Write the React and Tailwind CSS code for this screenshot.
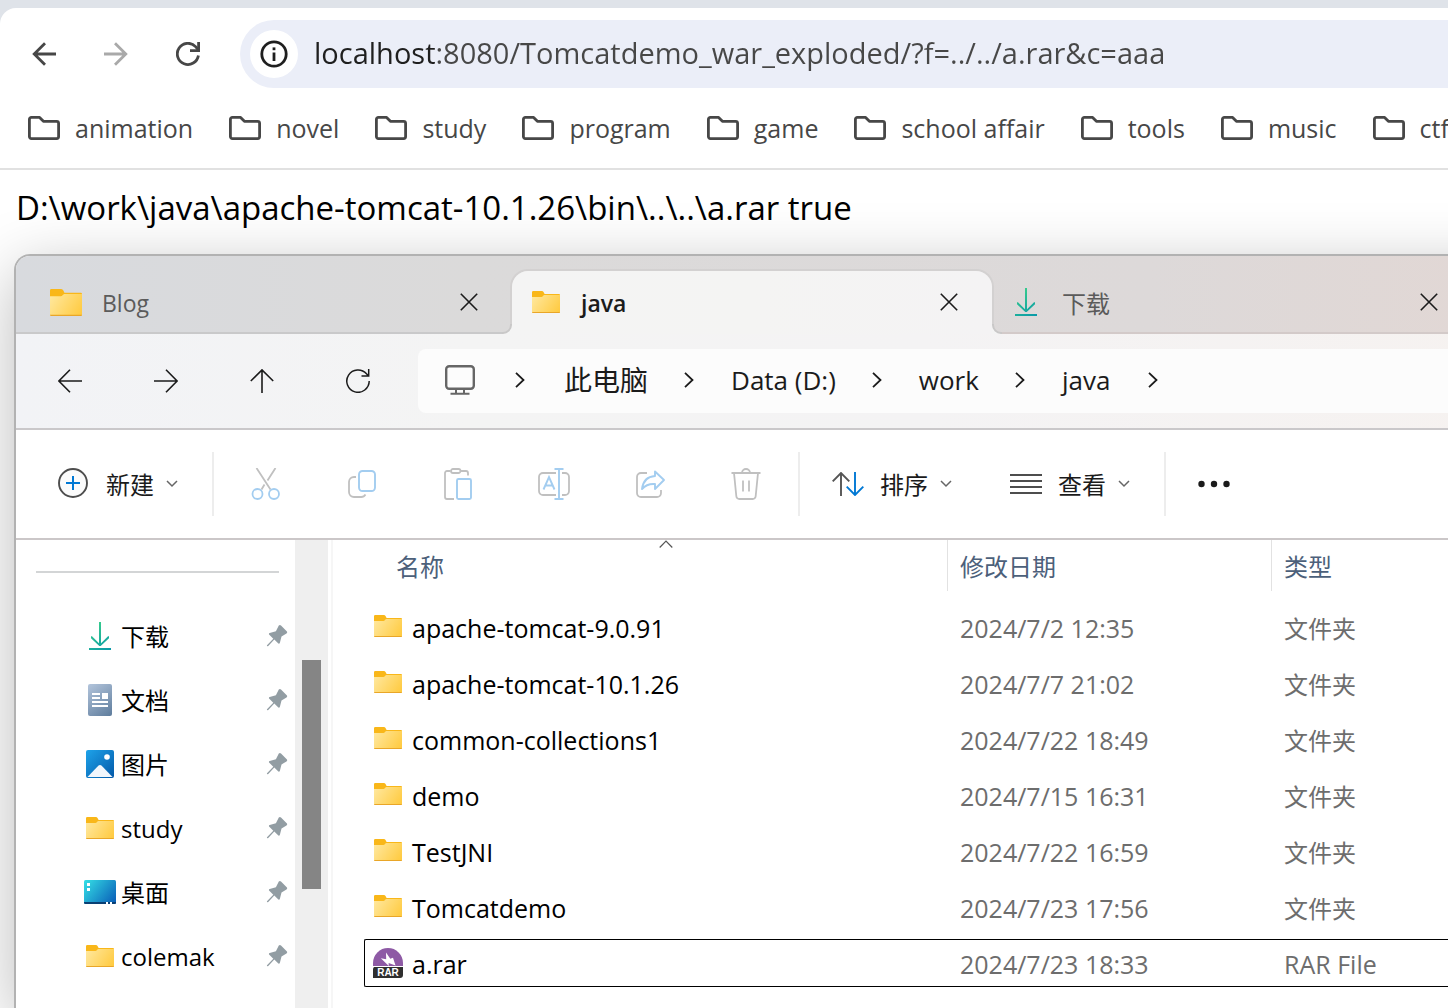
import React from "react";

const bookmarks = ["animation", "novel", "study", "program", "game", "school affair", "tools", "music", "ctf"];

const files = [
  { name: "apache-tomcat-9.0.91", date: "2024/7/2 12:35", type: "文件夹" },
  { name: "apache-tomcat-10.1.26", date: "2024/7/7 21:02", type: "文件夹" },
  { name: "common-collections1", date: "2024/7/22 18:49", type: "文件夹" },
  { name: "demo", date: "2024/7/15 16:31", type: "文件夹" },
  { name: "TestJNI", date: "2024/7/22 16:59", type: "文件夹" },
  { name: "Tomcatdemo", date: "2024/7/23 17:56", type: "文件夹" },
  { name: "a.rar", date: "2024/7/23 18:33", type: "RAR File", selected: true },
];

/* ---------- icons ---------- */

function Svg({ w, h, className = "", children }) {
  return (
    <svg width={w} height={h} viewBox={`0 0 ${w} ${h}`} fill="none" className={`shrink-0 ${className}`} aria-hidden="true">
      {children}
    </svg>
  );
}

const ChromeBack = () => (
  <Svg w={24} h={24}>
    <path d="M24 12H2M13 1.2 2.2 12 13 22.8" stroke="#474747" strokeWidth="2.8" />
  </Svg>
);

const ChromeForward = () => (
  <Svg w={24} h={24}>
    <path d="M0 12h22M11 1.2 21.8 12 11 22.8" stroke="#a9a9a9" strokeWidth="2.8" />
  </Svg>
);

const ChromeReload = () => (
  <Svg w={24} h={24}>
    <path d="M22.4 13.5A10.6 10.6 0 1 1 19.6 4.6L22.5 8" stroke="#474747" strokeWidth="2.8" />
    <path d="M22.6 0v8.6H14" stroke="#474747" strokeWidth="2.8" />
  </Svg>
);

const InfoIcon = () => (
  <Svg w={28} h={28}>
    <circle cx="14" cy="14" r="12.2" stroke="#1f1f1f" strokeWidth="2.8" />
    <path d="M14 12.5V21" stroke="#1f1f1f" strokeWidth="2.8" />
    <path d="M14 7.4v2.8" stroke="#1f1f1f" strokeWidth="2.8" />
  </Svg>
);

const BookmarkFolder = () => (
  <Svg w={32} h={24}>
    <path d="M1.4 3.4a2 2 0 0 1 2-2h8.2l3.8 3.9h13.2a2 2 0 0 1 2 2v13.3a2 2 0 0 1-2 2H3.4a2 2 0 0 1-2-2z" stroke="#474747" strokeWidth="2.8" strokeLinejoin="round" />
  </Svg>
);

const FolderIcon = ({ big = false }) => (
  <svg width={big ? 32 : 28} height={big ? 27 : 22} viewBox="0 0 28 22" preserveAspectRatio="none" fill="none" className="shrink-0" aria-hidden="true">
    <defs>
      <linearGradient id="folderFace" x1="0" y1="3" x2="28" y2="22" gradientUnits="userSpaceOnUse">
        <stop stopColor="#ffe9a2" />
        <stop offset="1" stopColor="#ffc93c" />
      </linearGradient>
    </defs>
    <path d="M0 1.200A1.200 1.200 0 0 1 1.200 0h8.600c.8 0 1.500.6 2 1.400L12.600 3H27a1 1 0 0 1 1 1v3H0z" fill="#f9b719" />
    <path d="M0 6h9.500c1.200 0 1.800-2 3-2H28v16.800a1.200 1.200 0 0 1-1.200 1.200H1.200A1.200 1.200 0 0 1 0 20.800z" fill="url(#folderFace)" />
    <path d="M0 21h28a1 1 0 0 1-1 1H1a1 1 0 0 1-1-1z" fill="#e9a628" />
  </svg>
);

const DownloadIcon = () => (
  <Svg w={22} h={28}>
    <defs>
      <linearGradient id="dl" x1="2" y1="2" x2="20" y2="28" gradientUnits="userSpaceOnUse">
        <stop stopColor="#3bd08a" />
        <stop offset="1" stopColor="#0a9aa8" />
      </linearGradient>
    </defs>
    <path d="M10 0h2v21.200l7-7H20v2L11.700 24h-1.400L2 16.200v-2h1l7 7zM0 26h22v2H0z" fill="url(#dl)" />
  </Svg>
);

const DocumentIcon = () => (
  <Svg w={24} h={32}>
    <defs>
      <linearGradient id="doc" x1="0" y1="0" x2="24" y2="32" gradientUnits="userSpaceOnUse">
        <stop stopColor="#b3c5dc" />
        <stop offset="1" stopColor="#5e7c9c" />
      </linearGradient>
    </defs>
    <rect width="24" height="32" rx="2" fill="url(#doc)" />
    <path d="M4 9h8v2H4zM4 13h8v2H4zM14 9h6v6h-6zM4 17h16v2H4zM4 21h16v2H4z" fill="#fff" />
  </Svg>
);

const PictureIcon = () => (
  <Svg w={28} h={28}>
    <defs>
      <linearGradient id="pic" x1="0" y1="0" x2="28" y2="28" gradientUnits="userSpaceOnUse">
        <stop stopColor="#1ea3ea" />
        <stop offset="1" stopColor="#0358a8" />
      </linearGradient>
    </defs>
    <rect width="28" height="28" rx="2" fill="url(#pic)" />
    <path d="m1.500 27 10.800-11.300a2.500 2.500 0 0 1 3.400 0L26.500 27z" fill="#f1f6fc" />
    <circle cx="21" cy="7" r="2.800" fill="#fff" />
  </Svg>
);

const DesktopIcon = () => (
  <Svg w={32} h={24}>
    <defs>
      <linearGradient id="desk" x1="0" y1="0" x2="30" y2="24" gradientUnits="userSpaceOnUse">
        <stop stopColor="#35e0e6" />
        <stop offset="1" stopColor="#0a5fb8" />
      </linearGradient>
    </defs>
    <rect width="32" height="24" rx="1.500" fill="url(#desk)" />
    <path d="M0 22h32v.5a1.500 1.500 0 0 1-1.500 1.500h-29A1.500 1.500 0 0 1 0 22.500z" fill="#0a3f73" />
    <path d="M3 3h3v3H3zM3 8h3v3H3zM22 22h2v2h-2zM26 22h2v2h-2z" fill="#fff" />
  </Svg>
);

const RarIcon = () => (
  <Svg w={30} h={30}>
    <path d="M0 18V15a15 15 0 0 1 30 0v3z" fill="#8e5aa5" />
    <path d="M13 4.500 17.300 10.800 20 9.800 22.500 17.600 15.600 14.900 15.800 18 7.800 10.300 13.200 11.200z" fill="#fff" />
    <path d="M3 18.500h27V27a3 3 0 0 1-3 3H0v-8.500a3 3 0 0 1 3-3z" fill="#2f2f2f" />
    <path d="M0 18.500h30" stroke="#fff" />
    <text x="15" y="28" textAnchor="middle" fontFamily="Liberation Sans, sans-serif" fontWeight="700" fontSize="10" fill="#fff">RAR</text>
  </Svg>
);

const PinIcon = () => (
  <Svg w={22} h={22}>
    <path d="M12.800.6c.7-.7 1.500-.7 2.200 0l5.700 5.600c.7.7.7 1.700-.2 2.200l-5 3-1.600 6.400c-.3.900-1.200 1.100-1.800.5l-3.800-3.800L2 21.200c-.6.500-1.500-.4-1-1l6.300-6.400-4-4c-.7-.7-.4-1.500.4-1.700l6.200-1.800z" fill="#929da3" />
  </Svg>
);

const CloseIcon = () => (
  <Svg w={18} h={18}>
    <path d="m.8.8 16.400 16.400M17.200.8.800 17.200" stroke="#1b1b1b" strokeWidth="1.600" />
  </Svg>
);

const ChevronRight = () => (
  <Svg w={10} h={16}>
    <path d="m1 .8 7.500 7.200L1 15.200" stroke="#1b1b1b" strokeWidth="1.800" />
  </Svg>
);

const ChevronDown = () => (
  <Svg w={12} h={8}>
    <path d="m1 1 5 5 5-5" stroke="#666" strokeWidth="1.500" />
  </Svg>
);

const navIcons = [
  ["后退", <Svg key="b" w={24} h={24}><path d="M24 12H1.500M12 .8.900 12 12 23.200" stroke="#1b1b1b" strokeWidth="1.600" /></Svg>],
  ["前进", <Svg key="f" w={24} h={24}><path d="M0 12h22.500M12 .8 23.100 12 12 23.200" stroke="#1b1b1b" strokeWidth="1.600" /></Svg>],
  ["向上", <Svg key="u" w={24} h={24}><path d="M12 24V1.500M.8 12 12 .9 23.200 12" stroke="#1b1b1b" strokeWidth="1.600" /></Svg>],
  ["刷新", <Svg key="r" w={24} h={24}><path d="M23.200 12A11.200 11.200 0 1 1 20.500 4.800L22.500 7M22.700 0v7H15.500" stroke="#1b1b1b" strokeWidth="1.500" /></Svg>],
];

const MonitorIcon = () => (
  <Svg w={30} h={30}>
    <rect x="1.200" y="1.200" width="27.600" height="22.600" rx="3" stroke="#666" strokeWidth="2.400" />
    <path d="M11 24v4M19 24v4M5.500 28.700h19" stroke="#666" strokeWidth="2" />
  </Svg>
);

const G = "#c0c0c0";
const B = "#a3cdf0";
const actions = [
  ["剪切", <Svg key="1" w={32} h={32}>
    <path d="M6.500 0 20.500 21.500M25.500 0l-8 12.500M14.500 16.500 11.500 21.500" stroke={G} strokeWidth="1.800" />
    <circle cx="7.500" cy="26" r="5" stroke={B} strokeWidth="1.800" />
    <circle cx="24" cy="26" r="5" stroke={B} strokeWidth="1.800" />
  </Svg>],
  ["复制", <Svg key="2" w={32} h={32}>
    <path d="M10 9H8a5 5 0 0 0-5 5v10a5 5 0 0 0 5 5h7a5 5 0 0 0 4.500-2.500" stroke={G} strokeWidth="1.800" />
    <rect x="13" y="3" width="16" height="20" rx="3.500" stroke={B} strokeWidth="1.900" />
  </Svg>],
  ["粘贴", <Svg key="3" w={32} h={32}>
    <path d="M8.500 3H5a2 2 0 0 0-2 2v24a2 2 0 0 0 2 2h7M18.500 3H24a2 2 0 0 1 2 2v2.500" stroke={G} strokeWidth="1.800" />
    <rect x="9" y="1" width="9.500" height="4" rx="2" stroke={G} strokeWidth="1.800" />
    <rect x="15" y="11" width="14" height="20" rx="1.500" stroke={B} strokeWidth="1.900" />
  </Svg>],
  ["重命名", <Svg key="4" w={32} h={32}>
    <path d="M18 5H5a4 4 0 0 0-4 4v14a4 4 0 0 0 4 4h13M24 5h3a4 4 0 0 1 4 4v14a4 4 0 0 1-4 4h-3" stroke={G} strokeWidth="1.800" />
    <path d="M21 1v30M16.500 1h9M16.500 31h9M5.500 21.500 11 9l5.500 12.500M7.500 17.500h7" stroke={B} strokeWidth="1.900" />
  </Svg>],
  ["共享", <Svg key="5" w={32} h={32}>
    <path d="M13 5H7a4 4 0 0 0-4 4v16a4 4 0 0 0 4 4h16a4 4 0 0 0 4-4v-3" stroke={G} strokeWidth="1.800" />
    <path d="M21 3.500 30 12l-9 9v-5c-6-.5-9.500 1-13 5C9 13 13 8.500 21 8z" stroke={B} strokeWidth="1.900" strokeLinejoin="round" />
  </Svg>],
  ["删除", <Svg key="6" w={32} h={32}>
    <path d="M1.500 5h29M12 5a4 4 0 0 1 8 0M4 5l2.300 23a3 3 0 0 0 3 3h13.400a3 3 0 0 0 3-3L28 5M13 12.500v11M19 12.500v11" stroke={G} strokeWidth="1.800" />
  </Svg>],
];

const NewIcon = () => (
  <Svg w={32} h={32}>
    <circle cx="15" cy="15" r="14" stroke="#4d4d4d" strokeWidth="1.900" fill="#fbfbfb" />
    <path d="M15 8v14M8 15h14" stroke="#0078d4" strokeWidth="2" />
  </Svg>
);

const SortIcon = () => (
  <Svg w={32} h={24}>
    <path d="M9 24V1.500M.7 9.300 9 1l8.300 8.300" stroke="#555" strokeWidth="1.900" />
    <path d="M23 0v22.500M14.700 14.700 23 23l8.300-8.300" stroke="#0078d4" strokeWidth="1.900" />
  </Svg>
);

const ViewIcon = () => (
  <Svg w={32} h={20}>
    <path d="M0 1h32M0 7h32M0 13h32M0 19h32" stroke="#4d4d4d" strokeWidth="1.900" />
  </Svg>
);

const MoreIcon = () => (
  <Svg w={32} h={8}>
    <circle cx="3.500" cy="4" r="3.200" fill="#1b1b1b" />
    <circle cx="16" cy="4" r="3.200" fill="#1b1b1b" />
    <circle cx="28.500" cy="4" r="3.200" fill="#1b1b1b" />
  </Svg>
);

/* ---------- explorer parts ---------- */

const quickAccess = [
  ["下载", <DownloadIcon key="d" />],
  ["文档", <DocumentIcon key="w" />],
  ["图片", <PictureIcon key="p" />],
  ["study", <FolderIcon key="s" />],
  ["桌面", <DesktopIcon key="k" />],
  ["colemak", <FolderIcon key="c" />],
];

function MenuButton({ icon, label, className = "" }) {
  return (
    <button className={`flex shrink-0 items-center text-2xl text-[#1b1b1b] ${className}`}>
      {icon}
      <span className="mr-3 ml-4 pt-[2px]">{label}</span>
      <ChevronDown />
    </button>
  );
}

const Separator = () => <div className="h-16 w-[2px] shrink-0 bg-[#ededed]" />;

/* Small curved foot where the active tab meets its neighbour */
function TabFoot({ className }) {
  return (
    <svg width="10" height="10" viewBox="0 0 10 10" fill="none" className={`absolute bottom-0 ${className}`} aria-hidden="true">
      <path d="M10 0v10H0V9h1a8 8 0 0 0 8-8V0z" fill="#f4f4f4" />
      <path d="M0 9h1a8 8 0 0 0 8-8V0" stroke="#c9c8c8" strokeWidth="2" />
    </svg>
  );
}

function Tabs() {
  return (
    <div role="tablist" className="flex h-[78px] items-end overflow-hidden rounded-tl-[14px] bg-[linear-gradient(to_right,#d8dade,#dbdada_30%,#ddd9d9_75%,#e2d7d4)]">
      <div className="flex h-full w-[496px] shrink-0 items-center border-b-2 border-[#c9c9ca] pt-4 pr-[34px] pl-[34px] text-2xl text-[#5b5b5b]">
        <FolderIcon big />
        <button role="tab" aria-selected="false" className="ml-5 flex-1 pt-[2px] text-left text-[23px]">Blog</button>
        <button aria-label="关闭"><CloseIcon /></button>
      </div>
      <div className="relative flex h-[63px] w-[480px] shrink-0 items-center rounded-t-2xl bg-[linear-gradient(to_right,#f4f4f4,#f4f4f3_50%,#f4f3f4)] pr-[34px] pb-[2px] pl-5 text-[23px] font-semibold text-[#1b1b1b] shadow-[0_0_0_2px_#d3d1d1]">
        <TabFoot className="-left-[10px]" />
        <TabFoot className="-right-[10px] -scale-x-100" />
        <FolderIcon />
        <button role="tab" aria-selected="true" className="ml-[21px] flex-1 pt-1 text-left">java</button>
        <button aria-label="关闭"><CloseIcon /></button>
      </div>
      <div className="flex h-full min-w-[480px] flex-1 items-center border-b-2 border-[#d3cac9] pt-4 pr-[34px] pl-[23px] text-2xl text-[#5b5b5b]">
        <DownloadIcon />
        <button role="tab" aria-selected="false" className="ml-[25px] w-[358px] pt-[3px] text-left">下载</button>
        <button aria-label="关闭"><CloseIcon /></button>
      </div>
    </div>
  );
}

function NavBar() {
  return (
    <div className="flex h-24 items-center border-b-2 border-[#cac8ca] bg-[linear-gradient(to_right,#f2f3f6,#f4f4f4_30%,#f4f3f4_60%,#f6f2f0)] pl-[6px]">
      {navIcons.map(([label, icon]) => (
        <button key={label} aria-label={label} className="flex h-16 w-24 shrink-0 items-center justify-center">{icon}</button>
      ))}
      <nav aria-label="路径" className="ml-3 flex h-16 flex-1 items-center overflow-hidden rounded-l-lg bg-[#fcfcfc] pb-[2px] pl-[27px] text-[26px] whitespace-nowrap text-[#1b1b1b]">
        <MonitorIcon />
        <span className="mr-[39px] ml-10"><ChevronRight /></span>
        <a href="#" className="text-[28px]">此电脑</a>
        {["Data (D:)", "work", "java"].map((part) => (
          <React.Fragment key={part}>
            <span className="mr-[37px] ml-9"><ChevronRight /></span>
            <a href="#">{part}</a>
          </React.Fragment>
        ))}
        <span className="ml-[38px]"><ChevronRight /></span>
      </nav>
    </div>
  );
}

function Toolbar() {
  return (
    <div className="flex h-[110px] items-center overflow-hidden border-b-2 border-[#cbc7c8] bg-white">
      <MenuButton icon={<NewIcon />} label="新建" className="mr-[34px] ml-[42px]" />
      <Separator />
      <div className="flex px-1">
        {actions.map(([label, icon]) => (
          <button key={label} aria-label={label} disabled className="flex h-16 w-24 shrink-0 items-center justify-center">{icon}</button>
        ))}
      </div>
      <Separator />
      <MenuButton icon={<SortIcon />} label="排序" className="ml-8" />
      <MenuButton icon={<ViewIcon />} label="查看" className="mr-[34px] ml-[58px]" />
      <Separator />
      <button aria-label="更多" className="ml-8 flex h-16 items-center"><MoreIcon /></button>
    </div>
  );
}

function Sidebar() {
  return (
    <aside className="flex shrink-0">
      <div className="w-[279px]">
        <hr className="mt-[31px] mr-4 ml-5 border-t-2 border-[#d3d5d6]" />
        <ul className="mt-[31px] text-2xl text-black">
          {quickAccess.map(([label, icon]) => (
            <li key={label}>
              <button className="flex h-16 w-full items-center pr-[7px] pl-[68px] text-left">
                <span className="mr-[5px] flex w-8 justify-center">{icon}</span>
                <span className="flex-1 pt-[2px]">{label}</span>
                <PinIcon />
              </button>
            </li>
          ))}
        </ul>
      </div>
      <div className="w-[33px] bg-[#efefef] pt-[120px]">
        <div className="mx-auto h-[229px] w-[19px] bg-[#858585]" />
      </div>
      <div className="ml-[3px] w-[2px] bg-[#f6f6f6]" />
    </aside>
  );
}

function FileTable() {
  return (
    <div className="min-w-0 flex-1 overflow-hidden pl-[31px]">
      <table className="w-full min-w-[1084px] table-fixed border-separate border-spacing-0 text-left whitespace-nowrap">
        <colgroup>
          <col className="w-[584px]" />
          <col className="w-[324px]" />
          <col />
        </colgroup>
        <thead className="text-2xl text-[#4c607a]">
          <tr className="h-[51px]">
            <th className="relative border-r border-[#e2e2e2] pt-[2px] pl-8 font-normal">
              名称
              <span className="absolute top-0 right-0 left-5 flex justify-center">
                <Svg w={14} h={8}><path d="m.7 7.500 6.300-6.300 6.300 6.300" stroke="#555" strokeWidth="1.200" /></Svg>
              </span>
            </th>
            <th className="border-r border-[#e2e2e2] pt-[2px] pl-3 font-normal">修改日期</th>
            <th className="pt-[2px] pl-3 font-normal">类型</th>
          </tr>
          <tr className="h-2"><td /></tr>
        </thead>
        <tbody className="text-[25px]">
          {files.map((f) => (
            <tr key={f.name} className="h-14 text-[#6d6d6d]">
              <td className="p-0 text-black">
                <div className={`flex h-12 items-center gap-[9px] pl-2 ${f.selected ? "rounded-l-xs border-y border-l border-black" : "border border-transparent"}`}>
                  <span className="flex w-[30px] justify-center">{f.selected ? <RarIcon /> : <span className="pb-[2px]"><FolderIcon /></span>}</span>
                  <span className="pt-[3px]">{f.name}</span>
                </div>
              </td>
              <td className="p-0">
                <div className={`flex h-12 items-center pt-[3px] pl-3 ${f.selected ? "border-y border-black" : ""}`}>{f.date}</div>
              </td>
              <td className="p-0">
                <div className={`flex h-12 items-center pt-[3px] pl-3 ${f.selected ? "border-y border-black" : "text-2xl"}`}>{f.type}</div>
              </td>
            </tr>
          ))}
        </tbody>
      </table>
    </div>
  );
}

export default function App() {
  return (
    <div className="flex min-h-screen flex-col overflow-hidden bg-[#dfe3e9] pt-2 font-['Open_Sans','Noto_Sans_CJK_SC',sans-serif]">
      <header className="rounded-tl-2xl border-b-2 border-[#e1e1e1] bg-white">
        <div className="flex items-center pt-3 pl-8">
          <button aria-label="Back"><ChromeBack /></button>
          <button aria-label="Forward" className="ml-12"><ChromeForward /></button>
          <button aria-label="Reload" className="ml-12"><ChromeReload /></button>
          <div className="ml-10 flex h-[68px] flex-1 items-center rounded-l-full bg-[#ebeef8] pl-[10px]">
            <button aria-label="Site information" className="flex size-12 shrink-0 items-center justify-center rounded-full bg-white"><InfoIcon /></button>
            <input
              aria-label="Address"
              className="ml-4 min-w-0 flex-1 bg-[linear-gradient(to_right,#1f1f1f_122px,#474747_122px)] bg-clip-text pb-[2px] text-[29px] text-transparent outline-none"
              defaultValue="localhost:8080/Tomcatdemo_war_exploded/?f=../../a.rar&c=aaa"
            />
          </div>
        </div>
        <nav aria-label="Bookmarks" className="flex h-20 items-center gap-9 overflow-hidden pl-7 text-[25px] whitespace-nowrap text-[#474747]">
          {bookmarks.map((b) => (
            <a key={b} href="#" className="flex shrink-0 items-center gap-[15px]">
              <BookmarkFolder />
              <span className="pt-[2px]">{b}</span>
            </a>
          ))}
        </nav>
      </header>
      <main className="flex flex-1 flex-col overflow-hidden bg-white">
        <p className="px-4 pt-[14px] pb-[22px] text-[33px] leading-[48px] whitespace-nowrap text-black">
          D:\work\java\apache-tomcat-10.1.26\bin\..\..\a.rar true
        </p>
        <section aria-label="java" className="-mr-20 ml-[14px] flex flex-1 flex-col rounded-tl-2xl border-t-2 border-l-2 border-[#b2b2b2] bg-white shadow-[0_16px_64px_rgba(0,0,0,0.27)]">
          <Tabs />
          <NavBar />
          <Toolbar />
          <div className="flex flex-1">
            <Sidebar />
            <FileTable />
          </div>
        </section>
      </main>
    </div>
  );
}
